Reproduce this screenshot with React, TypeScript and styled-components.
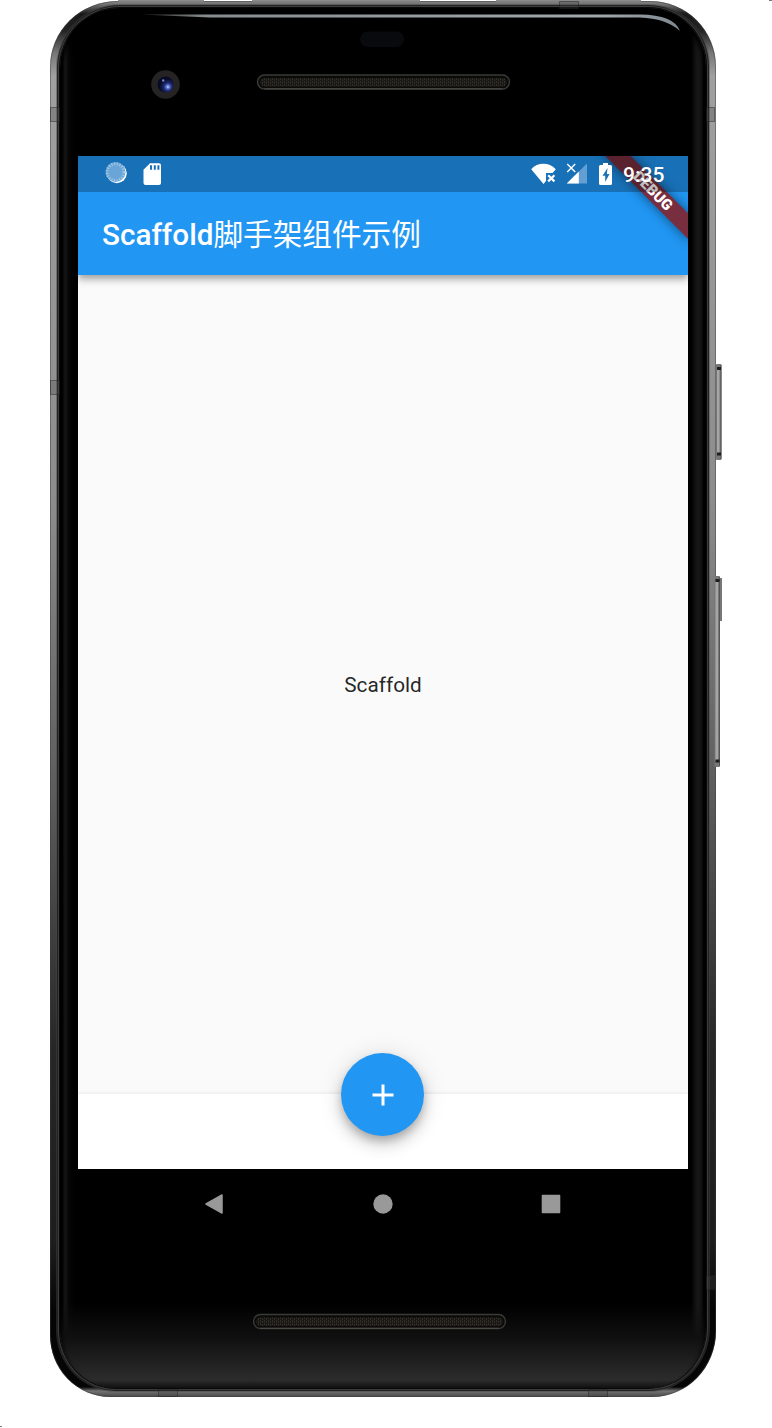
import React from "react";
import styled, { createGlobalStyle } from "styled-components";

const GlobalStyle = createGlobalStyle`
  *, *::before, *::after { box-sizing: border-box; }
  body { margin: 0; background: #fff; font-family: Roboto, "Noto Sans CJK SC", sans-serif; }
`;

const Stage = styled.main`
  position: relative;
  width: 772px;
  height: 1428px;
  padding: 1px 56px 0 50px;
  overflow: hidden;
  background: #fff;
`;

const Body = styled.div`
  position: relative;
  width: 666px;
  height: 1396px;
  padding: 7px 10px 9px 10px;
  border-radius: 68px 66px 64px 60px / 66px 66px 66px 62px;
  background: linear-gradient(
    to bottom,
    #858585 0,
    #6d6d6d 4px,
    #181818 13px,
    #242424 30px,
    #777 52px,
    #a0a0a0 75px,
    #8c8c8c 500px,
    #5b5b5b 800px,
    #262626 1050px,
    #1d1d1d 1240px,
    #050505 1310px,
    #050505 1386px,
    #737373 1390px,
    #484848 1396px
  );
  box-shadow: inset 0 0 0 1px rgba(60, 60, 60, 0.45);
`;

const Glass = styled.div`
  width: 646px;
  height: 1380px;
  padding: 148px 18px 0;
  border-radius: 60px 58px 58px 56px / 60px 58px 60px 58px;
  background:
    linear-gradient(to bottom, transparent 1295px, #101010 1330px, #2c2c2c 1372px, #111 1380px),
    linear-gradient(to right, #000 2px, #171717 5px, #050505 9px, #000 14px, #000 631px, #171717 637px, #151515 641px, #000 644px);
  box-shadow: 0 0 0 1px #080808, 0 0 0 2px #3c3c3c, 0 0 0 3px #222, 0 0 0 4px #4447, inset 0 5px 5px 1px #000;
`;

const Hardware = styled.svg`
  position: absolute;
  inset: 0;
  width: 772px;
  height: 1428px;
  pointer-events: none;
`;

const Screen = styled.section`
  position: relative;
  display: flex;
  flex-direction: column;
  width: 610px;
  height: 1013px;
  overflow: hidden;
  background: #fafafa;
`;

const Header = styled.header`
  display: flex;
  flex-direction: column;
  height: 118.6px;
  flex: none;
  background: #2196f3;
  box-shadow: 0 3px 6px -1px rgba(0, 0, 0, 0.2), 0 6px 7px rgba(0, 0, 0, 0.14), 0 1px 12px rgba(0, 0, 0, 0.12);
`;

const StatusBar = styled.div`
  position: relative;
  z-index: 2;
  display: flex;
  flex: none;
  justify-content: space-between;
  align-items: center;
  height: 35.6px;
  padding: 0 24px 0 27px;
  background: rgba(0, 0, 0, 0.25);
`;

const StatusGroup = styled.div<{ $gap: number }>`
  display: flex;
  align-items: center;
  gap: ${({ $gap }) => $gap}px;
`;

const Clock = styled.span`
  width: 41px;
  color: #fff;
  font-size: 21px;
  font-weight: 500;
  line-height: 36px;
  white-space: nowrap;
  padding-top: 2px;
`;

const Title = styled.h1`
  margin: 0;
  padding: 0 24px;
  color: #fff;
  font-size: 29.65px;
  font-weight: 500;
  line-height: 81.6px;
  white-space: nowrap;
`;

const TitleHan = styled.span`
  font-family: "Noto Sans CJK SC", sans-serif;
  font-weight: 400;
`;

const Content = styled.div`
  display: flex;
  flex: 1;
  align-items: center;
  justify-content: center;
  color: rgba(0, 0, 0, 0.87);
  font-size: 20.76px;
`;

const BottomBar = styled.footer`
  display: flex;
  justify-content: center;
  height: 74.6px;
  flex: none;
  background: #fff;
  box-shadow: 0 -1px 3px rgba(0, 0, 0, 0.07);
`;

const AddButton = styled.button`
  display: grid;
  place-items: center;
  width: 83px;
  height: 83px;
  margin: -41.4px 1px 0 0;
  padding: 0;
  border: 0;
  border-radius: 50%;
  background: #2196f3;
  box-shadow: 0 5px 8px -1px rgba(0, 0, 0, 0.2), 0 9px 15px rgba(0, 0, 0, 0.14), 0 2px 26px rgba(0, 0, 0, 0.12);
`;

const Ribbon = styled.div`
  position: absolute;
  z-index: 1;
  top: 26.4px;
  left: 514.6px;
  width: 120px;
  height: 17.8px;
  transform: rotate(45deg);
  background: rgba(141, 22, 22, 0.815);
  color: #fff;
  font-size: 15.1px;
  font-weight: 900;
  line-height: 18px;
  text-align: center;
  box-shadow: 0 0 12px rgba(0, 0, 0, 0.5);
`;

const NavBar = styled.nav`
  display: flex;
  justify-content: center;
  align-items: center;
  gap: 148.5px;
  height: 70px;
  padding-right: 1px;
`;

const rimBands = [
  { x: 50, y: 107, w: 10, h: 15 },
  { x: 50, y: 380, w: 10, h: 15 },
  { x: 706, y: 107, w: 9, h: 15 },
  { x: 706, y: 1275, w: 10, h: 15 },
  { x: 158, y: 1389, w: 20, h: 8 },
  { x: 588, y: 1389, w: 20, h: 8 },
  { x: 559, y: 1, w: 20, h: 8 },
];

function Speaker({ x, y }: { x: number; y: number }) {
  return (
    <g>
      <rect x={x} y={y} width="252" height="14" rx="7" fill="#0b0b0a" stroke="#3a3a38" strokeWidth="1.4" />
      <rect x={x + 3} y={y + 3} width="246" height="8.5" rx="4" fill="url(#mesh)" />
      <path d={`M${x + 7} ${y + 13.8}h238`} stroke="#504e48" />
    </g>
  );
}

function SideButton({ y, height, x = 716 }: { y: number; height: number; x?: number }) {
  return (
    <g>
      <rect x={x} y={y} width="5.5" height={height} rx="1" fill="#777" />
      <rect x={x + 1} y={y + 6} width="2.5" height={height - 12} fill="#a5a5a5" />
      <path d={`M${x + 5} ${y + 1}v${height - 2}`} stroke="#555" />
      <path d={`M${x + 1} ${y + 4.5}h4M${x + 1} ${y + height - 6}h4`} stroke="#1d1d1d" strokeWidth="3" />
    </g>
  );
}

function DeviceDetails() {
  return (
    <Hardware viewBox="0 0 772 1428" aria-hidden="true">
      <defs>
        <pattern id="mesh" width="4" height="3" patternUnits="userSpaceOnUse">
          <rect width="4" height="3" fill="#191814" />
          <path d="M.5 0v2M2.5 1v2" stroke="#322f28" />
        </pattern>
        <linearGradient id="shine" x1="140" x2="680" y1="0" y2="0" gradientUnits="userSpaceOnUse">
          <stop stopColor="#222" />
          <stop offset=".12" stopColor="#888c8e" />
          <stop offset=".85" stopColor="#a2a8aa" />
          <stop offset="1" stopColor="#7e8990" />
        </linearGradient>
        <radialGradient id="lens" cx=".65" cy=".65">
          <stop stopColor="#d3dbff" />
          <stop offset=".2" stopColor="#6179d6" />
          <stop offset=".5" stopColor="#1b296e" />
          <stop offset="1" stopColor="#080b25" />
        </radialGradient>
      </defs>
      <path d="M118 .8h86M252 .8h168M496 .8h145" stroke="#8a8a8a" strokeWidth="1.7" />
      <path d="M769 .5h3M0 1426.5h2" stroke="#777" />
      {rimBands.map((b) => (
        <rect key={`${b.x}-${b.y}`} x={b.x + 0.5} y={b.y + 0.5} width={b.w - 1} height={b.h - 1} fill="#444" fillOpacity=".3" stroke="#202020" strokeOpacity=".45" />
      ))}
      <path d="M140 14.6H640Q674 15 680 31Q666 18.500 640 17.600H210Z" fill="url(#shine)" />
      <circle cx="165.5" cy="84.5" r="14.3" fill="#262324" />
      <circle cx="165.5" cy="84.5" r="8" fill="url(#lens)" />
      <circle cx="163.2" cy="80.5" r="1.2" fill="#7184c8" />
      <rect x="360" y="31.5" width="44" height="15.5" rx="7.5" fill="#090a0e" />
      <Speaker x={257.5} y={75} />
      <Speaker x={253.5} y={1314.5} />
      <SideButton y={364} height={96} />
      <path d="M721 578v43" stroke="#777" strokeWidth="2" />
      <SideButton x={714.5} y={576} height={191} />
    </Hardware>
  );
}

function SyncIcon() {
  return (
    <svg width="23" height="23" viewBox="0 0 23 23">
      <circle cx="11.800" cy="11.300" r="10" fill="#fff" />
      <circle cx="10.500" cy="10" r="10" fill="#69a5d7" />
      <circle cx="10.500" cy="10.200" r="8.400" fill="none" stroke="#a5c8e8" strokeWidth="2.800" strokeDasharray="1.200 1.500" />
    </svg>
  );
}

function CardIcon() {
  return (
    <svg width="18" height="22" viewBox="0 0 18 22">
      <path d="M7 .2h9a2 2 0 0 1 2 2V20a2 2 0 0 1-2 2H2.5a2 2 0 0 1-2-2V6.8Z" fill="#fff" />
      <path d="M8 2.3v4.5M11.8 2.3v4.5M15.4 2.3v4.5" stroke="#1c70b5" strokeWidth="2" />
    </svg>
  );
}

function WifiIcon() {
  return (
    <svg width="26" height="22" viewBox="0 0 26 22">
      <path d="M1.2 6.2C7.500-1 19-1 25.800 6.200L22.500 10H16V18L13.500 21Z" fill="#fff" />
      <path d="m18.200 12.200 6.200 6.200m0-6.200-6.200 6.200" stroke="#fff" strokeWidth="2.200" />
    </svg>
  );
}

function SignalIcon() {
  return (
    <svg width="21" height="21" viewBox="1 0 21 21">
      <path d="M21 .5v20H.7Z" fill="#639fd3" />
      <path d="M12.800 8.500v12H.7Z" fill="#fff" />
      <path d="m1.200 1 8 8m0-8-8 8" stroke="#fff" strokeWidth="1.500" />
    </svg>
  );
}

function BatteryIcon() {
  return (
    <svg width="13" height="22" viewBox="0 0 13 22">
      <path d="M4 0h5v2h2.5A1.5 1.5 0 0 1 13 3.5v17a1.5 1.5 0 0 1-1.5 1.5h-10A1.5 1.5 0 0 1 0 20.5v-17A1.5 1.5 0 0 1 1.5 2H4Z" fill="#fff" />
      <path d="M8.600 5 3.500 12.700h2.700V19l4.300-8H7.800Z" fill="#1c70b5" />
    </svg>
  );
}

export default function App() {
  return (
    <Stage>
      <GlobalStyle />
      <Body>
        <Glass>
          <Screen>
            <Header>
              <StatusBar>
                <StatusGroup $gap={15}>
                  <SyncIcon />
                  <CardIcon />
                </StatusGroup>
                <StatusGroup $gap={11}>
                  <WifiIcon />
                  <SignalIcon />
                  <BatteryIcon />
                  <Clock>9:35</Clock>
                </StatusGroup>
              </StatusBar>
              <Title>
                Scaffold<TitleHan>脚手架组件示例</TitleHan>
              </Title>
            </Header>
            <Content>Scaffold</Content>
            <BottomBar>
              <AddButton aria-label="Add">
                <svg width="22" height="22" viewBox="0 0 22 22">
                  <path d="M11 .5v21M.5 11h21" stroke="#fff" strokeWidth="3" />
                </svg>
              </AddButton>
            </BottomBar>
            <Ribbon>DEBUG</Ribbon>
          </Screen>
          <NavBar>
            <svg width="20" height="20" viewBox="0 0 20 20">
              <path d="M2 10 18 1v18Z" fill="#999" stroke="#999" strokeWidth="1.5" strokeLinejoin="round" />
            </svg>
            <svg width="20" height="20" viewBox="0 0 20 20">
              <circle cx="10" cy="10" r="9.7" fill="#999" />
            </svg>
            <svg width="20" height="20" viewBox="0 0 20 20">
              <rect x=".7" y=".7" width="18.6" height="18.6" rx="1" fill="#999" />
            </svg>
          </NavBar>
        </Glass>
      </Body>
      <DeviceDetails />
    </Stage>
  );
}
